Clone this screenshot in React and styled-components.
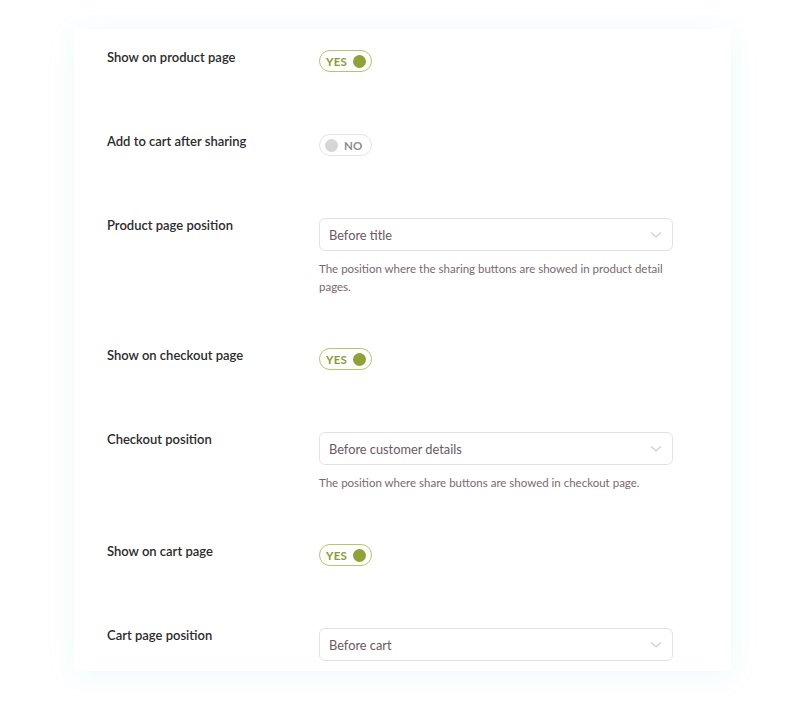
import React from 'react'
import styled, { createGlobalStyle } from 'styled-components'

const GlobalStyle = createGlobalStyle`
  body {
    margin: 0;
    background: #ffffff;
    font-family: 'Lato', 'Noto Sans', sans-serif;
  }
`

const Page = styled.div`
  padding: 29px 0 0 74px;
  height: 716px;
  box-sizing: border-box;
`

const Card = styled.div`
  width: 657px;
  box-sizing: border-box;
  background: #ffffff;
  padding: 21px 33px 10px;
  box-shadow: 0 4px 28px rgba(60, 190, 210, 0.09);
  display: flex;
  flex-direction: column;
  gap: 52px;
`

const Row = styled.div`
  display: grid;
  grid-template-columns: 212px 354px;
  align-items: start;
`

const Label = styled.div`
  font-size: 13px;
  line-height: 14px;
  font-weight: 600;
  color: #2b2b2b;
  padding-top: 0;
`

const Control = styled.div`
  min-height: 32px;
`

const Toggle = styled.div`
  width: 53px;
  height: 22px;
  box-sizing: border-box;
  border-radius: 11px;
  border: 1px solid ${p => (p.$on ? '#b7c46e' : '#e4e4e4')};
  display: flex;
  align-items: center;
  flex-direction: ${p => (p.$on ? 'row' : 'row-reverse')};
  justify-content: flex-end;
  gap: 6px;
  padding: 0 5px;
`

const ToggleText = styled.span`
  font-size: 11.5px;
  font-weight: 700;
  letter-spacing: 0.2px;
  color: ${p => (p.$on ? '#8a9b35' : '#8c8c8c')};
`

const Knob = styled.span`
  width: 13px;
  height: 13px;
  border-radius: 50%;
  background: ${p => (p.$on ? '#8fa137' : '#d6d6d6')};
`

const Select = styled.div`
  height: 33px;
  box-sizing: border-box;
  border: 1px solid #e2e2e2;
  border-radius: 6px;
  display: flex;
  align-items: center;
  justify-content: space-between;
  padding: 0 10px 0 9px;
  font-size: 12.8px;
  color: #6a5961;
`

const Description = styled.p`
  margin: 9px 0 0;
  font-size: 11.5px;
  line-height: 18px;
  color: #7a6870;
`

const Chevron = () => (
  <svg width="12" height="8" viewBox="0 0 12 8" fill="none">
    <path d="M1 1.5 L6 6 L11 1.5" stroke="#cfcfcf" strokeWidth="1.2" />
  </svg>
)

const Switch = ({ on }) => (
  <Toggle $on={on}>
    <ToggleText $on={on}>{on ? 'YES' : 'NO'}</ToggleText>
    <Knob $on={on} />
  </Toggle>
)

const fields = [
  { label: 'Show on product page', toggle: true },
  { label: 'Add to cart after sharing', toggle: false },
  {
    label: 'Product page position',
    value: 'Before title',
    help: 'The position where the sharing buttons are showed in product detail pages.',
  },
  { label: 'Show on checkout page', toggle: true },
  {
    label: 'Checkout position',
    value: 'Before customer details',
    help: 'The position where share buttons are showed in checkout page.',
  },
  { label: 'Show on cart page', toggle: true },
  { label: 'Cart page position', value: 'Before cart' },
]

export default function App() {
  return (
    <>
      <GlobalStyle />
      <Page>
        <Card>
          {fields.map(f => (
            <Row key={f.label}>
              <Label>{f.label}</Label>
              <Control>
                {f.value === undefined ? (
                  <Switch on={f.toggle} />
                ) : (
                  <>
                    <Select>
                      {f.value}
                      <Chevron />
                    </Select>
                    {f.help && <Description>{f.help}</Description>}
                  </>
                )}
              </Control>
            </Row>
          ))}
        </Card>
      </Page>
    </>
  )
}
